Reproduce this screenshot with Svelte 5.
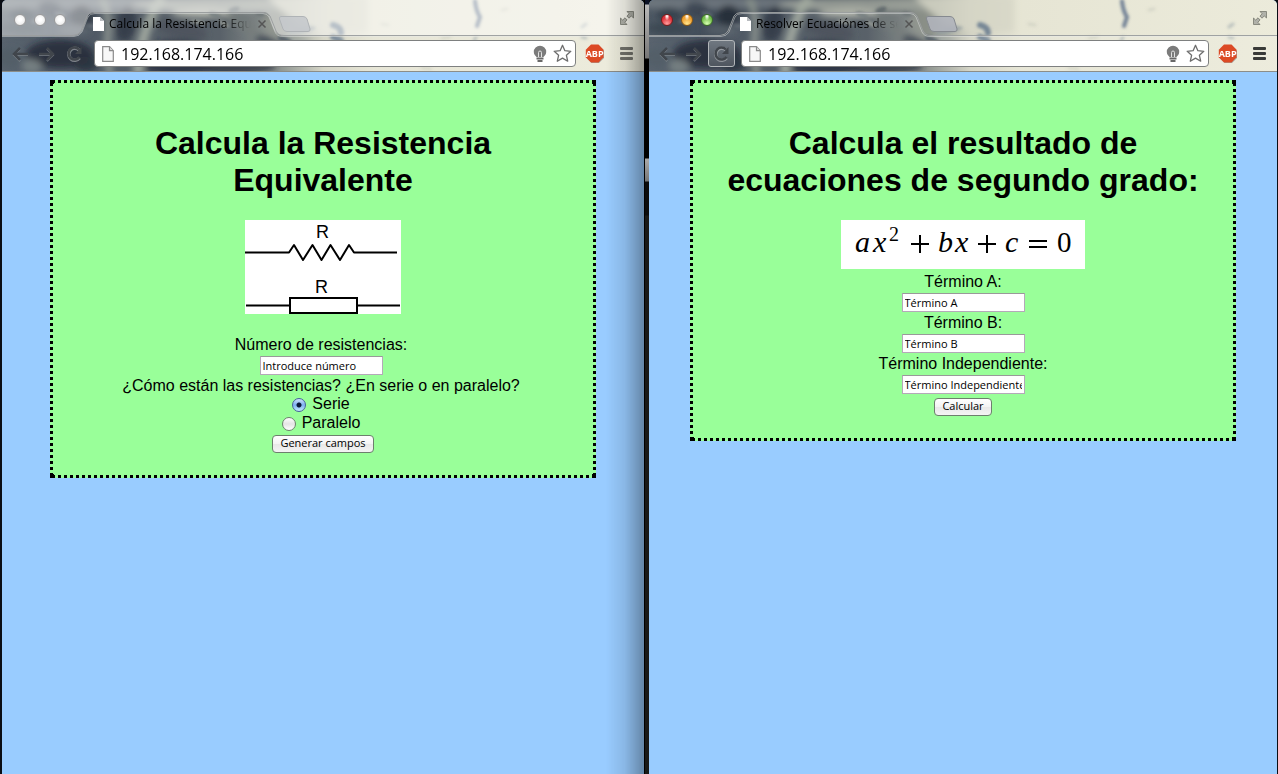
<script>
  const windows = [
    { id: 'res', active: false, title: 'Calcula la Resistencia Equivalente', url: '192.168.174.166' },
    { id: 'ecu', active: true, title: 'Resolver Ecuaciónes de segundo grado', url: '192.168.174.166' }
  ];

  const terms = [
    { id: 'a', label: 'Término A:', value: 'Término A' },
    { id: 'b', label: 'Término B:', value: 'Término B' },
    { id: 'c', label: 'Término Independiente:', value: 'Término Independiente' }
  ];

  // Soft blotches of the browser theme: [cx, cy, rx, ry, rotation, colour, opacity]
  const blotches = [
    [60, 3, 120, 6, 0, '#7d858a', 0.7],
    [210, 5, 80, 7, 0, '#a3a79f', 0.8],
    [20, 14, 12, 7, 0, '#303a47', 0.7],
    [20, 28, 22, 6, 0, '#39434f', 0.8],
    [48, 8, 12, 7, 10, '#323c49', 0.7],
    [80, 16, 12, 11, 10, '#232b39', 0.9],
    [72, 30, 16, 5, 0, '#5b656c', 0.7],
    [58, 54, 34, 14, 0, '#161d2b', 0.9],
    [8, 58, 12, 10, 0, '#46535d', 0.8],
    [30, 66, 10, 7, 0, '#7b8583', 0.7],
    [84, 64, 12, 8, 0, '#1b2230', 0.9],
    [124, 24, 10, 18, 10, '#232c3a', 0.9],
    [175, 58, 40, 18, 0, '#1a2232', 0.85],
    [180, 30, 26, 8, 12, '#3d4650', 0.8],
    [235, 66, 40, 8, 0, '#1e2532', 0.8],
    [200, 13, 30, 5, 0, '#babdb0', 0.8],
    [240, 24, 18, 6, 30, '#6c7372', 0.7],
    [268, 44, 16, 6, 25, '#2c3541', 0.8],
    [275, 22, 14, 12, 0, '#8b8f87', 0.8],
    [295, 42, 14, 4, 10, '#98a09e', 0.8]
  ];

  // Sharper leaf shadows and specks: [cx, cy, rx, ry, rotation, colour, opacity]
  const specks = [
    [213, 15, 7, 3, 20, '#6a7476', 0.8],
    [232, 10, 6, 3, -20, '#596367', 0.8],
    [258, 14, 5, 2, 10, '#5f686c', 0.8],
    [196, 22, 8, 2, 10, '#9da29a', 0.7],
    [222, 24, 6, 2, 30, '#a3a79d', 0.7],
    [36, 20, 7, 2, -20, '#75808a', 0.5],
    [58, 14, 6, 2, 15, '#78828a', 0.5],
    [90, 26, 7, 2, 10, '#6c767d', 0.5],
    [300, 30, 14, 3, -10, '#8d98a0', 0.7],
    [283, 40, 8, 3, 20, '#33404e', 0.7]
  ];
</script>

{#snippet pageIcon(w, h)}
  <svg width={w} height={h} viewBox="0 0 12 16" aria-hidden="true">
    <path d="M.7.7h6.8l3.8 4v10.6H.7z" fill="#f7f7f7" stroke="#8a8a8a" stroke-width="1.2" />
    <path d="M7.5.7v4h3.8" fill="#ddd" stroke="#8a8a8a" stroke-width="1.2" />
  </svg>
{/snippet}

{#snippet chrome(win)}
  <header class="chrome">
    <svg class="theme" viewBox="0 0 642 71" preserveAspectRatio="xMinYMin slice" aria-hidden="true">
      <defs>
        <linearGradient id="base-{win.id}" x1="0" x2="1" y1="0" y2="0">
          <stop offset="0" stop-color="#4d5863" />
          <stop offset=".1" stop-color="#414c59" />
          <stop offset=".34" stop-color="#4d565e" />
          <stop offset=".44" stop-color="#8f958f" />
          <stop offset=".5" stop-color="#d2d2c3" />
          <stop offset=".58" stop-color="#e6e5d4" />
          <stop offset="1" stop-color="#ecebdb" />
        </linearGradient>
        <filter id="soft-{win.id}" x="-30%" y="-60%" width="160%" height="220%"><feGaussianBlur stdDeviation="3" /></filter>
        <filter id="fine-{win.id}" x="-100%" y="-30%" width="300%" height="160%"><feGaussianBlur stdDeviation="1.4" /></filter>
      </defs>
      <rect width="642" height="71" fill="url(#base-{win.id})" />
      <g filter="url(#soft-{win.id})">
        {#each blotches as [cx, cy, rx, ry, rot, fill, op]}
          <ellipse {cx} {cy} {rx} {ry} {fill} opacity={op} transform="rotate({rot} {cx} {cy})" />
        {/each}
        <path d="M265 -4h100v36h-44q-30-6-56-36z" fill="#d6d6c7" opacity=".8" />
        <path d="M100 -2q8 18 6 34t2 44" stroke="#8e978f" fill="none" stroke-width="7" opacity=".8" />
        <path d="M160 -4q-12 20-18 40t-6 40" stroke="#a3aba0" fill="none" stroke-width="10" opacity=".85" />
      </g>
      <g filter="url(#fine-{win.id})" fill="none" stroke-linecap="round">
        {#each specks as [cx, cy, rx, ry, rot, fill, op]}
          <ellipse {cx} {cy} {rx} {ry} {fill} opacity={op} transform="rotate({rot} {cx} {cy})" />
        {/each}
        <path d="M473 1q1 10 5 16l-3 9" stroke="#5d7089" stroke-width="4" opacity=".85" />
        <path d="M331 25q8 2 8 8M331 37l8 4" stroke="#5e7389" stroke-width="6" opacity=".8" />
        <path d="M580 27l4-3M580 37l4 1M474 37l-2 4" stroke="#8795a0" stroke-width="3" opacity=".5" />
        <path d="M380 24l6 1M440 38l8-1M500 10l5-1M420 68l9 1" stroke="#c4c6ba" stroke-width="3" opacity=".5" />
      </g>
      <path d="M0 0H642V36H282C274 35 272 30 270 24L267 16Q265 12 261 12H93Q88 12 86 16L80 31Q78 35 72 36H0Z" fill="#fff" opacity={win.active ? 0 : 0.48} />
      <path d="M72 36Q78 35 80 31L86 16Q88 12 93 12H261Q265 12 267 16L274 32Q276 36 282 36H642V72H0V36Z" fill="#fff" opacity=".07" />
    </svg>
    <svg class="outline" aria-hidden="true" width="100%" height="71">
      <path d="M0 36.500H72Q78 36 80 32L86 17Q88 13.500 93 13.500H261Q265 13.500 267 17L273 32Q275 36.500 281 36.500H2000" fill="none" stroke="#e7e9e9" stroke-opacity=".45" />
      <path d="M0 35.500H71Q77 35 79 31L85 16Q87 12.500 92 12.500H262Q266 12.500 268 16L274 31Q276 35.500 282 35.500H2000" fill="none" stroke="#9b9e9f" stroke-opacity=".95" />
    </svg>

    <div class="strip">
      <div class="lights" class:active={win.active}>
        <button aria-label="Cerrar"></button>
        <button aria-label="Minimizar"></button>
        <button aria-label="Ampliar"></button>
      </div>
      <div class="tab">
        <svg width="11" height="14" viewBox="0 0 11 14" aria-hidden="true">
          <path d="M0 0h7l4 4v10H0z" fill="#fff" /><path d="M7 0v4h4z" fill="#b9bcc0" />
        </svg>
        <span class="title">{win.title}</span>
        <button class="plain" aria-label="Cerrar pestaña">
          <svg width="10" height="10" viewBox="0 0 10 10"><path d="M1.500 1.500l7 7M8.500 1.500l-7 7" stroke="#555" stroke-width="1.500" /></svg>
        </button>
      </div>
      <button class="plain newtab" aria-label="Nueva pestaña">
        <svg width="34" height="18" viewBox="0 0 34 18">
          <path d="M3 1.500H25Q28 1.500 29 4L32 14Q32.500 16.500 30 16.500H9Q6 16.500 5 14L1.500 4Q1 1.500 3 1.500Z" fill={win.active ? '#b0b4bb' : '#c5c9cc'} fill-opacity=".9" stroke={win.active ? '#85898f' : '#afb3b6'} />
        </svg>
      </button>
      <button class="plain full" aria-label="Pantalla completa">
        <svg width="14" height="14" viewBox="0 0 14 14" fill="#b0b1a9" stroke="#77786f" stroke-width=".8">
          <path d="M7 .5h6.500V7L11.300 4.900 9 7.200 6.900 5 9.200 2.800z" />
          <path d="M7 13.500H.5V7L2.700 9.100 5 6.800 7.100 9 4.800 11.200z" />
        </svg>
      </button>
    </div>

    <div class="toolbar">
      <nav>
        <button class="plain nav" aria-label="Atrás">
          <svg width="18" height="16" viewBox="0 0 18 16" fill="none"><path d="M17 9H3M9 3L3 9l6 6" stroke="#a4a9ad" stroke-opacity=".6" stroke-width="2" /><path d="M17 8H3M9 2L3 8l6 6" stroke="#41464c" stroke-width="2.500" /></svg>
        </button>
        <button class="plain nav" aria-label="Adelante">
          <svg width="18" height="16" viewBox="0 0 18 16" fill="none"><path d="M1 9h14M9 3l6 6-6 6" stroke="#a4a9ad" stroke-opacity=".6" stroke-width="2" /><path d="M1 8h14M9 2l6 6-6 6" stroke="#41464c" stroke-width="2.500" /></svg>
        </button>
        <button class="plain nav reload" class:raised={win.active} aria-label="Recargar">
          <svg width="18" height="18" viewBox="0 0 18 18" fill="none"><path d="M13.500 13A6 6 0 1 1 13 5" stroke="#b4b8bb" stroke-opacity=".6" stroke-width="3.500" /><path d="M13.500 12A6 6 0 1 1 13 4.500" stroke="#41464c" stroke-width="2.500" /><path d="M15.500 2v7H9z" fill="#41464c" /></svg>
        </button>
      </nav>
      <div class="omnibox">
        {@render pageIcon(12, 16)}
        <input aria-label="Dirección" value={win.url} />
        <svg width="14" height="18" viewBox="0 0 14 18" aria-hidden="true">
          <path d="M7 .8A6.200 6.200 0 0 1 13.200 7C13.200 9.500 11.500 10.500 10.500 12H3.500C2.500 10.500.8 9.500.8 7A6.200 6.200 0 0 1 7 .8Z" fill="#7b7b7b" />
          <path d="M5.500 12V7.500Q5.500 6 7 6T8.500 7.500V12" fill="none" stroke="#e2e2e2" />
          <path d="M3.500 12.500h7v2h-7zM4.500 15h5v2h-5z" fill="#686868" />
        </svg>
        <button class="plain" aria-label="Añadir a marcadores">
          <svg width="19" height="19" viewBox="0 0 19 19"><path d="M9.500 1.300L11.900 6.700 17.800 7.300 13.400 11.300 14.700 17.200 9.500 14.100 4.300 17.200 5.600 11.300 1.200 7.300 7.100 6.700Z" fill="#fff" stroke="#6d6d6d" stroke-width="1.300" stroke-linejoin="round" /></svg>
        </button>
      </div>
      <button class="plain" aria-label="Adblock Plus">
        <svg width="20" height="20" viewBox="0 0 20 20"><path d="M6.500 1.500h7.500L19 6.500v7.500L14 19H6.500L1.500 14V6.500z" fill="#777" opacity=".6" /><path d="M6 .5h7.500L18.500 5.800v7.500L13.500 18.500H6L.8 13.300V5.800z" fill="#dc4a25" /><text x="9.600" y="13" text-anchor="middle" font-family="Liberation Sans Narrow, Open Sans, sans-serif" font-weight="700" font-size="9" fill="#fff">ABP</text></svg>
      </button>
      <button class="plain menu" class:dark={win.active} aria-label="Menú"><i></i><i></i><i></i></button>
    </div>
  </header>
{/snippet}

<div class="desktop">
  <section class="window inactive">
    {@render chrome(windows[0])}
    <main>
      <form class="box" onsubmit={(e) => e.preventDefault()}>
        <h1>Calcula la Resistencia Equivalente</h1>
        <svg class="picture spaced" width="156" height="94" viewBox="0 0 156 94" role="img" aria-label="Símbolos de resistencia">
          <rect width="156" height="94" fill="#fff" />
          <g fill="none" stroke="#000" stroke-width="2">
            <path d="M0 32.500H44L49 25 58 40 67.500 25 76.500 40 85.500 25 95 40 104 25 109 32.500H152" stroke-linejoin="round" />
            <path d="M1 85.500H45M113 85.500H155" />
            <path d="M45 78H112V93H45Z" />
          </g>
          <g font-family="Liberation Sans, Arial, sans-serif" font-size="18" fill="#000">
            <text x="71" y="18">R</text>
            <text x="70" y="73">R</text>
          </g>
        </svg>
        <div class="group">
          <label for="numero">Número de resistencias:</label>
          <input class="field" id="numero" type="text" value="Introduce número" />
          <fieldset>
            <legend>¿Cómo están las resistencias? ¿En serie o en paralelo?</legend>
            <label class="choice"><input type="radio" name="modo" value="serie" checked />Serie</label>
            <label class="choice"><input type="radio" name="modo" value="paralelo" />Paralelo</label>
          </fieldset>
        </div>
        <button class="submit tight">Generar campos</button>
      </form>
    </main>
  </section>
  <div class="divider"></div>
  <section class="window">
    {@render chrome(windows[1])}
    <main>
      <form class="box" onsubmit={(e) => e.preventDefault()}>
        <h1>Calcula el resultado de ecuaciones de segundo grado:</h1>
        <svg class="picture" width="244" height="49" viewBox="0 0 244 49" role="img" aria-label="ax² + bx + c = 0">
          <rect width="244" height="49" fill="#fff" />
          <g font-family="Liberation Serif, Times New Roman, serif" font-size="30" fill="#000">
            <g font-style="italic">
              <text x="14" y="32">a</text><text x="32" y="32">x</text>
              <text x="97" y="32">b</text><text x="114" y="32">x</text>
              <text x="164" y="32">c</text>
            </g>
            <text x="48" y="21" font-size="20">2</text>
            <text x="216" y="32" font-size="29">0</text>
          </g>
          <path d="M70 24H88M79 15V33M137 24H155M146 15V33M188 21H206M188 27H206" stroke="#000" stroke-width="2" />
        </svg>
        {#each terms as term}
          <label for={term.id}>{term.label}</label>
          <input class="field" id={term.id} type="text" value={term.value} />
        {/each}
        <button class="submit">Calcular</button>
      </form>
    </main>
  </section>
</div>

<style>
  :global(body) {
    margin: 0;
    background: #0a0d14;
  }

  .desktop {
    display: grid;
    grid-template-columns: minmax(0, 642fr) 5px minmax(0, 628fr);
    min-height: 100vh;
    padding: 0 1px 0 2px;
    box-sizing: border-box;
    font-family: 'Liberation Sans', Arial, sans-serif;
    font-size: 16px;
    color: #000;
  }

  .window {
    position: relative;
    display: flex;
    flex-direction: column;
    background: #9cf;
    border-radius: 5px 5px 0 0;
    overflow: hidden;
  }

  .inactive::after {
    content: '';
    position: absolute;
    inset: 0 0 0 auto;
    width: 38px;
    background: linear-gradient(90deg, transparent, rgba(0, 0, 0, 0.1) 50%, rgba(0, 0, 0, 0.34));
    pointer-events: none;
  }

  .divider {
    background: linear-gradient(#0b1226 0 4px, #b9b9b9 5px, #777 58px, #000 59px 158px, #aaa 159px, #777 181px, #0b0b0b 182px 215px, #191917 216px);
    border-left: 1px solid #000;
  }

  .chrome {
    position: relative;
    height: 72px;
    box-sizing: border-box;
    border-bottom: 1px solid #8c8d88;
  }

  .theme,
  .outline {
    position: absolute;
    inset: 0;
    width: 100%;
    height: 100%;
  }

  button {
    font-family: inherit;
  }

  .plain {
    display: flex;
    align-items: center;
    justify-content: center;
    padding: 0;
    border: 0;
    background: none;
  }

  .strip {
    position: relative;
    display: flex;
    align-items: center;
    height: 36px;
    padding: 0 10px 0 12px;
    box-sizing: border-box;
  }

  .lights {
    display: flex;
    gap: 8px;
    padding-top: 4px;
    margin-right: 27px;
  }

  .lights button {
    width: 12px;
    height: 12px;
    padding: 0;
    border: 1px solid #9a9a9a;
    border-radius: 50%;
    background: radial-gradient(circle at 50% 45%, #fff 20%, #e2e2e2);
  }

  .lights.active button {
    border-color: #7b1c1c;
    background: radial-gradient(ellipse at 50% 10%, #fff 5%, transparent 35%), radial-gradient(circle at 50% 85%, #ff9c9c, #e0343c 60%);
  }

  .lights.active button:nth-child(2) {
    border-color: #8c5a14;
    background: radial-gradient(ellipse at 50% 10%, #fff 5%, transparent 35%), radial-gradient(circle at 50% 85%, #ffe58c, #f0a030 60%);
  }

  .lights.active button:nth-child(3) {
    border-color: #3c6d28;
    background: radial-gradient(ellipse at 50% 10%, #fff 5%, transparent 35%), radial-gradient(circle at 50% 85%, #d6ffb0, #74bf4c 60%);
  }

  .tab {
    display: flex;
    align-items: center;
    width: 174px;
    padding-top: 12px;
    margin-right: 11px;
  }

  .title {
    flex: 1;
    margin: 0 6px 0 5px;
    overflow: hidden;
    white-space: nowrap;
    font: 12px/16px 'Open Sans', 'Noto Sans', sans-serif;
    mask-image: linear-gradient(90deg, #000 80%, transparent);
  }

  .newtab {
    padding-top: 12px;
  }

  .full {
    margin-left: auto;
  }

  .toolbar {
    position: relative;
    display: flex;
    align-items: center;
    height: 35px;
    padding: 0 11px 0 5px;
    box-sizing: border-box;
  }

  nav {
    display: flex;
    align-items: center;
    gap: 1px;
    margin-right: 6px;
  }

  .nav {
    width: 26px;
    height: 27px;
    box-sizing: border-box;
  }

  .reload {
    width: 27px;
  }

  .raised {
    border: 1px solid #b2b6b9;
    border-radius: 3px;
    background: linear-gradient(#6f7780, #4f565f);
  }

  .omnibox {
    display: flex;
    flex: 1;
    align-items: center;
    min-width: 0;
    height: 27px;
    padding: 0 3px 0 7px;
    margin-right: 9px;
    box-sizing: border-box;
    border: 1px solid #7e8080;
    border-radius: 4px;
    background: #fff;
  }

  .omnibox input {
    flex: 1;
    min-width: 0;
    padding: 0 0 0 7px;
    border: 0;
    outline: 0;
    background: none;
    color: #000;
    font: 16px/22px 'Open Sans', 'Noto Sans', sans-serif;
  }

  .omnibox button {
    margin-left: 6px;
  }

  .menu {
    flex-direction: column;
    gap: 2px;
    margin-left: 15px;
  }

  .menu i {
    width: 13px;
    height: 3px;
    border-radius: 1px;
    background: #73736c;
  }

  .menu.dark i {
    background: #393a38;
  }

  main {
    flex: 1;
    padding: 8px;
  }

  .box {
    display: flex;
    flex-direction: column;
    align-items: center;
    max-width: 546px;
    padding: 45px 33px 25px;
    margin: 0 auto;
    box-sizing: border-box;
    text-align: center;
    background:
      linear-gradient(#000 0 0) 0 0 / 4px 4px no-repeat,
      linear-gradient(#000 0 0) 100% 0 / 4px 4px no-repeat,
      linear-gradient(#000 0 0) 0 100% / 4px 4px no-repeat,
      linear-gradient(#000 0 0) 100% 100% / 4px 4px no-repeat,
      linear-gradient(90deg, #000 3px, #9f9 3px) 2px 0 / 6px 3px repeat-x,
      linear-gradient(90deg, #000 3px, #9f9 3px) 2px 100% / 6px 3px repeat-x,
      linear-gradient(#000 3px, #9f9 3px) 0 3px / 3px 6px repeat-y,
      linear-gradient(#000 3px, #9f9 3px) 100% 3px / 3px 6px repeat-y,
      #9f9;
  }

  h1 {
    margin: 0 0 21px;
    font-size: 32px;
    line-height: 37px;
  }

  .picture {
    margin-bottom: 2px;
  }

  .spaced {
    margin-bottom: 20px;
  }

  .group {
    display: flex;
    flex-direction: column;
    align-items: center;
    padding-right: 4px;
  }

  label,
  legend {
    padding: 0;
    line-height: 22px;
  }

  legend {
    margin-bottom: -3px;
  }

  .field {
    width: 123px;
    height: 19px;
    padding: 0 2px;
    box-sizing: border-box;
    margin: 0;
    border: 1px solid #b4a9b8;
    border-top-color: #999;
    background: #fff;
    color: #000;
    font: 11px/15px 'Open Sans', 'Noto Sans', sans-serif;
  }

  fieldset {
    display: flex;
    flex-direction: column;
    align-items: center;
    min-width: 0;
    padding: 0;
    margin: 0;
    border: 0;
  }

  .choice {
    display: flex;
    align-items: center;
    gap: 6px;
    line-height: 19px;
  }

  .choice input {
    appearance: none;
    width: 14px;
    height: 14px;
    margin: 2px 0 0;
    border: 1px solid #6f7f6f;
    border-radius: 50%;
    background: linear-gradient(#fff, #e4e4e4 50%, #fff);
  }

  .choice input:checked {
    border-color: #46619c;
    background: radial-gradient(circle, #0b1a3a 2px, transparent 3px), linear-gradient(#cfe2fb, #7db0f0 50%, #c4ecff);
  }

  .submit {
    height: 18px;
    padding: 0 7px 2px;
    margin-top: 4px;
    box-sizing: border-box;
    border: 1px solid #6d7f6d;
    border-radius: 4px;
    background: linear-gradient(#fff, #f3f3f3 50%, #e8e8e8 50%, #f4f4f4);
    color: #000;
    font: 11px/14px 'Open Sans', 'Noto Sans', sans-serif;
  }

  .tight {
    margin-top: 3px;
  }
</style>
